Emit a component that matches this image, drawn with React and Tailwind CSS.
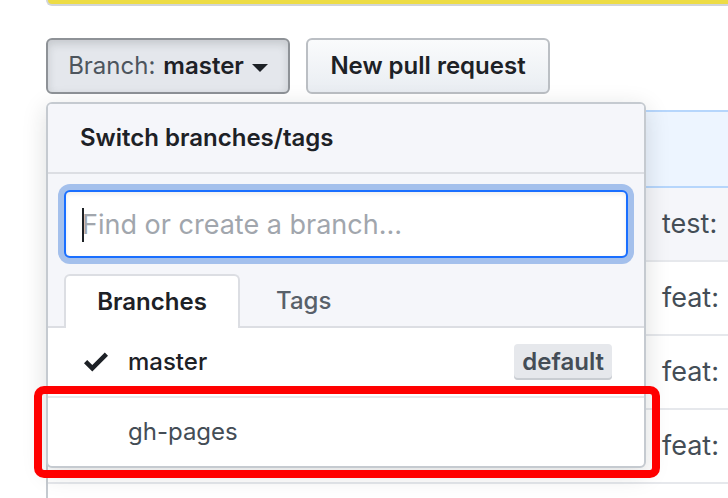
import React from "react";

const commits = ["test:", "feat:", "feat:", "feat:", ""];

function BranchMenu() {
  return (
    <div className="absolute top-full left-0 z-10 mt-2 w-[600px] rounded-md border-2 border-[#c5cad0] bg-white shadow-[0_6px_24px_rgba(27,31,35,0.15)]">
      <div className="rounded-t bg-[#f5f6fa]">
        <h2 className="border-b-2 border-[#dcdee3] px-8 py-4 text-2xl leading-9 font-semibold text-[#1d2126]">
          Switch branches/tags
        </h2>
        <div className="relative px-4 pt-4">
          <input
            type="text"
            aria-label="Find or create a branch"
            placeholder="Find or create a branch…"
            className="block h-[68px] w-full rounded-md border-2 border-[#1a6fff] bg-white px-4 text-[27px] text-[#24292e] shadow-[inset_0_2px_4px_rgba(27,31,35,0.08),0_0_0_6px_#a4c0ec] outline-none placeholder:text-[#a1a6ad] placeholder:opacity-100"
          />
          <span className="absolute top-[34px] left-[34px] h-[34px] w-0.5 bg-[#1d2126]" />
        </div>
        <div role="tablist" className="flex border-b-2 border-[#dcdee3] px-4 pt-4 text-2xl leading-9">
          <button
            role="tab"
            aria-selected="true"
            className="-mb-0.5 h-[54px] w-44 rounded-t-md border-2 border-b-0 border-[#dcdee3] bg-white font-semibold text-[#1d2126]"
          >
            Branches
          </button>
          <button role="tab" aria-selected="false" className="h-[52px] border-t-2 border-transparent px-9 font-medium text-[#586069]">
            Tags
          </button>
        </div>
      </div>
      <ul className="text-2xl">
        <li className="flex h-[70px] items-center border-b-2 border-[#e6e8ec] pr-8 pl-9">
          <svg viewBox="0 0 24 20" className="h-5 w-6 shrink-0" aria-hidden="true">
            <path d="M24 3.800 8.300 19.500 0 11.200 3.200 8 8.300 13.100 20.800 0.600Z" fill="#1d2126" />
          </svg>
          <span className="ml-5 grow font-medium text-[#1d2126]">master</span>
          <span className="rounded bg-[#e6e8ec] px-2 leading-9 font-semibold text-[#444d56] shadow-[inset_0_-2px_0_#c9cdd2]">
            default
          </span>
        </li>
        <li className="flex h-[68px] items-center pr-8 pl-20 text-[#444d56]">gh-pages</li>
      </ul>
      <div className="pointer-events-none absolute -right-4 -bottom-3 -left-3.5 h-[92px] rounded-[10px] border-8 border-[#ff0000]" />
    </div>
  );
}

export default function App() {
  return (
    <main className="h-screen overflow-hidden bg-white pl-[46px] font-['Inter','Liberation_Sans',sans-serif] text-[#1d2126]">
      <div className="h-1.5 rounded-bl-md border-b-2 border-l-2 border-[#d1d5d8] bg-[#eddc45]" />
      <div className="mt-8 flex gap-4 text-2xl leading-9">
        <div className="relative">
          <button
            aria-expanded="true"
            className="flex h-14 w-[244px] items-center justify-center gap-2 rounded-md border-2 border-[#8e9297] bg-[#e4e7ec] shadow-[inset_0_4px_8px_rgba(27,31,35,0.15)]"
          >
            <span className="text-[#4d555d]">Branch:</span>
            <span className="font-semibold">master</span>
            <svg viewBox="0 0 16 8" className="mt-1 h-2 w-4" aria-hidden="true">
              <path d="M0 0H16L8 8Z" fill="#1d2126" />
            </svg>
          </button>
          <BranchMenu />
        </div>
        <button className="h-14 w-[244px] rounded-md border-2 border-[#bbbfc4] bg-linear-to-b from-[#fafbfc] to-[#e9edf2] font-semibold">
          New pull request
        </button>
      </div>
      <div className="mt-4 border-l-2 border-[#c5cad0]">
        <div className="h-[78px] border-y-2 border-[#b6d6fc] bg-[#edf5ff]" />
        <table className="w-full table-fixed border-separate border-spacing-0 text-[27px] leading-9 text-[#444d56]">
          <tbody>
            {commits.map((message, i) => (
              <tr key={i} className="first:bg-[#f5f6fa]">
                <td className="h-[74px] w-[614px] border-b-2 border-[#e6e8ec] p-0" />
                <td className="border-b-2 border-[#e6e8ec] p-0 whitespace-nowrap">{message}</td>
              </tr>
            ))}
          </tbody>
        </table>
      </div>
    </main>
  );
}
